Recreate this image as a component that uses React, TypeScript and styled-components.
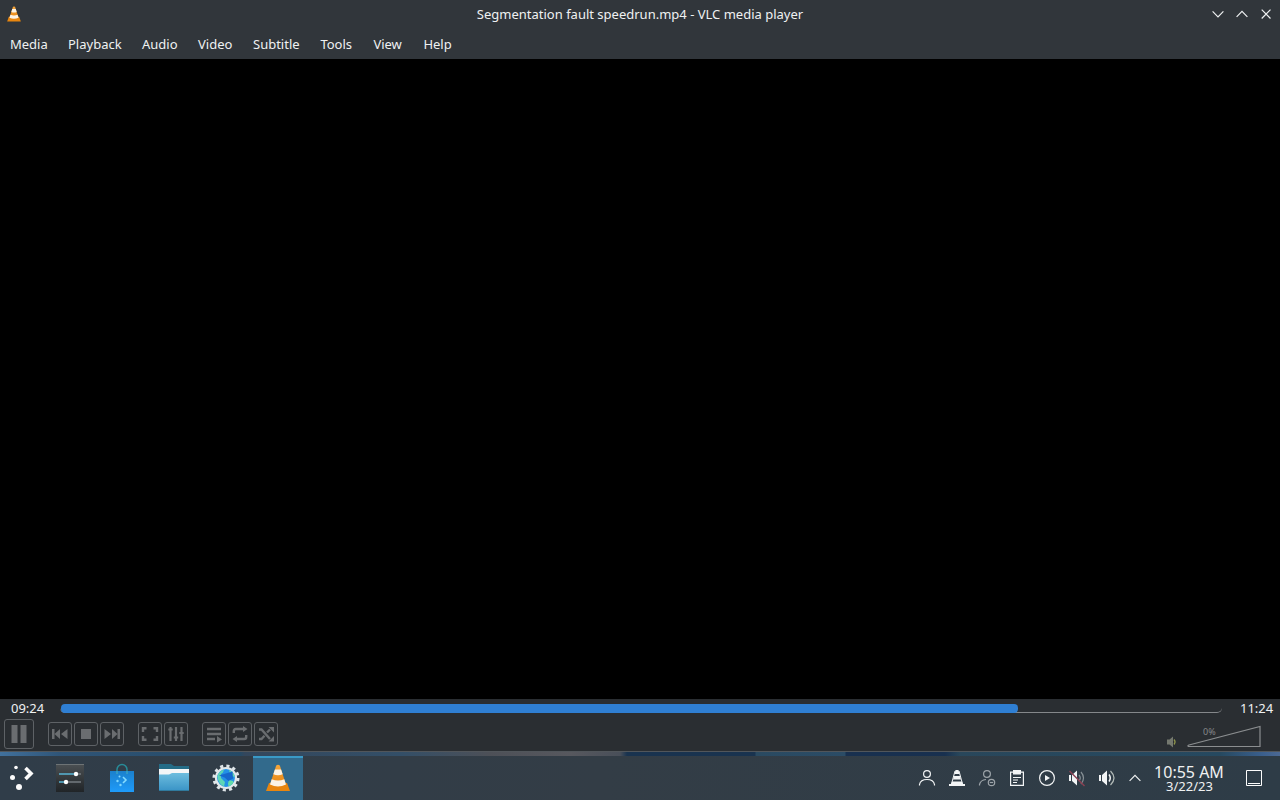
import React from "react";
import styled, { createGlobalStyle } from "styled-components";

const GlobalStyle = createGlobalStyle`
  body { margin: 0; background: #000; overflow: hidden; font-family: "Noto Sans", sans-serif; }
  * { box-sizing: border-box; }
  svg { display: block; flex: none; }
`;

const Desktop = styled.div`
  width: 1280px;
  height: 800px;
  display: flex;
  flex-direction: column;
  color: #eff1f2;
  font-size: 13px;
`;

const TitleBar = styled.header`
  height: 30px;
  flex: none;
  display: grid;
  grid-template-columns: 80px 1fr 80px;
  align-items: center;
  padding: 0 6px 2px;
  background: #31363b;
`;

const Title = styled.div`
  text-align: center;
  line-height: 18px;
  white-space: nowrap;
`;

const WindowButtons = styled.div`
  display: flex;
  justify-content: flex-end;
  gap: 8px;
`;

const MenuBar = styled.nav`
  height: 29px;
  flex: none;
  display: flex;
  background: #31363b;
`;

const MenuItem = styled.div<{ $width: number }>`
  width: ${(p) => p.$width}px;
  padding-left: 10px;
  line-height: 29px;
  white-space: nowrap;
`;

const Video = styled.main`
  height: 640px;
  flex: none;
  background: #000;
`;

const Controls = styled.section`
  height: 53px;
  flex: none;
  background: #2a2e32;
  border-bottom: 1px solid #51565b;
`;

const SeekRow = styled.div`
  height: 20px;
  display: flex;
  align-items: flex-start;
`;

const Time = styled.div<{ $side: "left" | "right" }>`
  width: ${(p) => (p.$side === "left" ? 60 : 58)}px;
  padding-left: ${(p) => (p.$side === "left" ? 11 : 18)}px;
  line-height: 18px;
`;

const Track = styled.div`
  width: 1162px;
  height: 9px;
  margin-top: 5px;
  border-bottom: 1px solid #85888b;
  border-radius: 0 0 5px 5px;
`;

const Played = styled.div`
  height: 9px;
  margin-left: 1px;
  border-radius: 4px;
  background: #2f7fd3;
`;

const ButtonRow = styled.div`
  height: 32px;
  display: flex;
  align-items: flex-start;
  padding-left: 4px;
`;

const Group = styled.div<{ $gap: number }>`
  display: flex;
  gap: 2px;
  margin: 3px 0 0 ${(p) => p.$gap}px;
`;

const ControlButton = styled.div<{ $size: number }>`
  width: ${(p) => p.$size}px;
  height: ${(p) => p.$size}px;
  display: flex;
  align-items: center;
  justify-content: center;
  border: 1px solid #5e6266;
  border-radius: 3px;
  color: #6a6d70;
`;

const Volume = styled.div`
  display: flex;
  margin-left: auto;
  padding-right: 17px;
`;

const VolumeSlider = styled.div`
  position: relative;
  width: 76px;
  height: 30px;
`;

const VolumeLabel = styled.span`
  position: absolute;
  left: 16px;
  top: 7px;
  font-size: 9px;
  line-height: 12px;
  color: #85888a;
`;

const WallpaperStrip = styled.div`
  height: 4px;
  flex: none;
  background: linear-gradient(
    90deg,
    #41719d 0, #2f5578 60px, #254a66 240px, #34475c 245px, #334f68 400px,
    #4d5057 490px, #57585e 570px, #494f59 620px, #19334f 627px, #19334f 755px,
    #2a4a61 756px, #2b4c66 845px, #18304f 846px, #18304f 945px, #29475b 960px,
    #264960 1220px, #3a5f8d 1262px, #4c6994 1280px
  );
`;

const Taskbar = styled.footer`
  height: 44px;
  flex: none;
  display: flex;
  background: linear-gradient(90deg, #303d49 0, #333d46 600px, #2e3c47 1280px);
`;

const Task = styled.div<{ $active?: boolean; $width: number }>`
  width: ${(p) => p.$width}px;
  height: 44px;
  display: flex;
  align-items: center;
  justify-content: center;
  background: ${(p) => (p.$active ? "#326a8c" : "transparent")};
  border-top: ${(p) => (p.$active ? "2px solid #3a9ac7" : "0")};
  padding-bottom: ${(p) => (p.$active ? "2px" : "0")};
`;

const Tray = styled.div`
  display: flex;
  align-items: center;
  gap: 12px;
  margin-left: auto;
`;

const TrayExpander = styled.div`
  margin-left: -1px;
`;

const Clock = styled.div`
  width: 84px;
  padding-top: 8px;
  margin: 0 14px 0 4px;
  text-align: center;
  white-space: nowrap;
`;

const ClockTime = styled.div`
  font-size: 16px;
  line-height: 17px;
`;

const ClockDate = styled.div`
  font-size: 13px;
  line-height: 10px;
  margin-left: 1px;
`;

const ShowDesktop = styled.div`
  display: flex;
  align-items: center;
  width: 35px;
`;

const Cone = ({ size }: { size: number }) => (
  <svg width={size} height={size} viewBox="0 0 28 28">
    <defs>
      <linearGradient id="cone" x1="0" y1="0" x2="0" y2="1">
        <stop offset="0" stopColor="#f5a63c" />
        <stop offset="1" stopColor="#e8850f" />
      </linearGradient>
    </defs>
    <path d="M5 19h18l3 8H2z" fill="#e8860f" />
    <path d="M12.200 1.500Q14 0 15.800 1.500L22 20.500q-8 4-16 0z" fill="url(#cone)" />
    <path d="M10.900 5.400h6.200l1.600 4.900q-4.700 1.800-9.400 0zM7.700 15.300q6.300 2.500 12.600 0L22 20.500q-8 4-16 0z" fill="#fbf3e6" />
  </svg>
);

const Chevron = ({ up }: { up?: boolean }) => (
  <svg width="16" height="16" viewBox="0 0 16 16" fill="none" stroke="currentColor" strokeWidth="1.2">
    <path d={up ? "M2.6 10.8 8 5.4l5.4 5.4" : "M2.6 5.4 8 10.8l5.4-5.4"} />
  </svg>
);

const Glyph = ({ children }: { children: React.ReactNode }) => (
  <svg width="18" height="18" viewBox="0 0 18 18" fill="none" stroke="currentColor" strokeWidth="2.4">
    {children}
  </svg>
);

const TrayIcon = ({ dim, children }: { dim?: boolean; children: React.ReactNode }) => (
  <svg width="18" height="18" viewBox="0 0 18 18" fill="none" stroke={dim ? "#9da4a9" : "#f3f5f6"} strokeWidth="1.2">
    {children}
  </svg>
);

const menus: [string, number][] = [
  ["Media", 58], ["Playback", 74], ["Audio", 56], ["Video", 55],
  ["Subtitle", 67.4], ["Tools", 53], ["View", 50], ["Help", 50],
];

const GearGlobe = () => (
  <svg width="28" height="28" viewBox="0 0 28 28">
    <circle cx="14" cy="14" r="12" fill="none" stroke="#dfe5e8" strokeWidth="3" strokeDasharray="3.1 3.183" />
    <circle cx="14" cy="14" r="10" fill="#2391e6" stroke="#e3e8ea" strokeWidth="2.200" />
    <path d="M5.400 12Q7 7 12 5.500l-1 3-2 1.500v4l4 4-1 4.500Q6 20 5.400 12z" fill="#5ed6b5" />
    <path d="M17 6q5 2 5.800 7l-3-1-2-3zM17 16l4 1 .5 1.500q-2 3.500-5 4l-.5-3z" fill="#65dca9" />
    <path d="M7 11.500 20.500 7.500 21 14.500l-4.500 2.500-4-3.500z" fill="#1668cc" />
  </svg>
);

export default function App() {
  return (
    <Desktop>
      <GlobalStyle />
      <TitleBar>
        <Cone size={16} />
        <Title>Segmentation fault speedrun.mp4 - VLC media player</Title>
        <WindowButtons>
          <Chevron />
          <Chevron up />
          <svg width="16" height="16" viewBox="0 0 16 16" stroke="currentColor" strokeWidth="1.2">
            <path d="m3.700 3.700 8.800 8.800m0-8.800-8.800 8.800" />
          </svg>
        </WindowButtons>
      </TitleBar>
      <MenuBar>
        {menus.map(([label, width]) => (
          <MenuItem key={label} $width={width}>{label}</MenuItem>
        ))}
      </MenuBar>
      <Video />
      <Controls>
        <SeekRow>
          <Time $side="left">09:24</Time>
          <Track><Played style={{ width: 957 }} /></Track>
          <Time $side="right">11:24</Time>
        </SeekRow>
        <ButtonRow>
          <ControlButton $size={30}>
            <svg width="18" height="20" viewBox="0 0 18 20" fill="currentColor"><path d="M1.500 1h6v18h-6zM10.500 1h6v18h-6z" /></svg>
          </ControlButton>
          <Group $gap={14}>
            <ControlButton $size={24}><Glyph><path d="M1 4h2.500v10H1zM3.500 9 9 4v10zM10 9l6.500-5v10z" fill="currentColor" stroke="none" /></Glyph></ControlButton>
            <ControlButton $size={24}><Glyph><path d="M4 4h10v10H4z" fill="currentColor" stroke="none" /></Glyph></ControlButton>
            <ControlButton $size={24}><Glyph><path d="M14.500 4H17v10h-2.500zM9 4l5.500 5L9 14zM1.500 4 8 9l-6.500 5z" fill="currentColor" stroke="none" /></Glyph></ControlButton>
          </Group>
          <Group $gap={14}>
            <ControlButton $size={24}><Glyph><path d="M5.500 3.200H2V7M12.500 3.200H16V7M5.500 14.800H2V11M12.500 14.800H16V11" /></Glyph></ControlButton>
            <ControlButton $size={24}><Glyph><path d="M3.500 2v14M9 2v14M14.500 2v14M1.300 4.500h4.400M6.800 12.500h4.400M12.300 8h4.400" strokeWidth="2.200" /></Glyph></ControlButton>
          </Group>
          <Group $gap={14}>
            <ControlButton $size={24}><Glyph><path d="M2 4h14M2 9h14M2 14h8" /><path d="m12 11 5 3.500-5 3z" fill="currentColor" stroke="none" /></Glyph></ControlButton>
            <ControlButton $size={24}><Glyph><path d="M2.800 8V6q0-2 2-2H13M15.200 10v2q0 2-2 2H5" /><path d="m12 1 4.500 3-4.500 3zM6 11l-4.500 3L6 17z" fill="currentColor" stroke="none" /></Glyph></ControlButton>
            <ControlButton $size={24}><Glyph><path d="M2 4.500h2.500L13 14M2 14h2.500l3-3.200M10 7.500 13 4.500" /><path d="M11.500 2H17v5.500zM11.500 16.500H17V11z" fill="currentColor" stroke="none" /></Glyph></ControlButton>
          </Group>
          <Volume>
            <svg width="20" height="30" viewBox="0 0 20 30">
              <path d="M0 20.500h2.500L6 17.500v11l-3.500-3H0z" fill="#74786f" />
              <path d="M7 20.500q2.200 2.500 0 5" fill="none" stroke="#8e944c" strokeWidth="1.200" />
            </svg>
            <VolumeSlider>
              <svg width="76" height="30" viewBox="0 0 76 30">
                <path d="M2 26 73 7.500v20H1.500q-1.500-.5.500-1.500z" fill="none" stroke="#8b8e90" strokeWidth="1.200" />
              </svg>
              <VolumeLabel>0%</VolumeLabel>
            </VolumeSlider>
          </Volume>
        </ButtonRow>
      </Controls>
      <WallpaperStrip />
      <Taskbar>
        <Task $width={42}>
          <svg width="26" height="28" viewBox="0 0 26 28" fill="#fcfcfc">
            <circle cx="8" cy="3.500" r="1.800" /><circle cx="4.500" cy="13.500" r="2.500" /><circle cx="11" cy="23" r="3" />
            <path d="m17.500 4 5.500 5.500-5.500 5.500" fill="none" stroke="#fcfcfc" strokeWidth="3.600" />
          </svg>
        </Task>
        <Task $width={56}>
          <svg width="28" height="28" viewBox="0 0 28 28">
            <defs><linearGradient id="settings" x1="0" y1="0" x2="0" y2="1"><stop stopColor="#4b5053" /><stop offset="1" stopColor="#202427" /></linearGradient></defs>
            <path d="M0 0h28v28H0z" fill="url(#settings)" /><path d="M0 .5h28" stroke="#6d7375" />
            <path d="M3 10h17M3 18h7" stroke="#58b4d4" strokeWidth="1.600" /><path d="M20 10h5M10 18h15" stroke="#747b80" strokeWidth="1.400" />
            <circle cx="20" cy="10" r="2.200" fill="white" /><circle cx="10" cy="18" r="2.200" fill="white" />
          </svg>
        </Task>
        <Task $width={48}>
          <svg width="26" height="30" viewBox="0 0 26 30">
            <defs><linearGradient id="bag" x1="0" y1="0" x2="0" y2="1"><stop stopColor="#1b80cc" /><stop offset="1" stopColor="#1e9bfa" /></linearGradient></defs>
            <path d="M8 9V6.500a5 5 0 0 1 10 0V9" fill="none" stroke="#288b98" strokeWidth="1.500" />
            <path d="M1 8h24v21H1z" fill="url(#bag)" /><path d="M8 11V8m10 3V8" stroke="#49b3bb" />
            <circle cx="10.500" cy="13.500" r="1" fill="#86d9ff" /><circle cx="8.500" cy="18" r="1.200" fill="#7ed7ff" /><circle cx="11.500" cy="22" r="1.200" fill="#7ed7ff" />
            <path d="m14 14 3 3-3 3" fill="none" stroke="#85dcff" strokeWidth="1.600" />
          </svg>
        </Task>
        <Task $width={56}>
          <svg width="30" height="30" viewBox="0 0 30 30">
            <defs><linearGradient id="folder" x1="0" y1="0" x2="0" y2="1"><stop stopColor="#6dbdde" /><stop offset="1" stopColor="#3993c6" /></linearGradient></defs>
            <path d="M0 1h12l3 2h15v18H0z" fill="#246c87" /><path d="M0 6h30v7H0z" fill="#f4f6f7" />
            <path d="M0 11.500h10l3-1.500h17v18H0z" fill="url(#folder)" /><path d="M0 27.500h30" stroke="#307a9d" />
          </svg>
        </Task>
        <Task $width={48}><GearGlobe /></Task>
        <Task $width={3} />
        <Task $width={50} $active><Cone size={28} /></Task>
        <Tray>
          <TrayIcon><circle cx="9" cy="5" r="3.400" /><path d="M1.500 16.500v-1q1-5 7.500-5t7.500 5v1" /></TrayIcon>
          <TrayIcon><path d="M7.500 1h3l1 4h-5zM6 7h6l1 3.500H5zM4 12.500h10l1 2.500h2v2H1v-2h2z" fill="#f3f5f6" stroke="none" /><path d="m7 2-3.500 13M11 2l3.500 13" strokeWidth="1" /></TrayIcon>
          <TrayIcon dim><circle cx="9" cy="5" r="3.400" /><path d="M1.500 16.500v-1q1-4.500 6.500-5" /><circle cx="13.500" cy="13.500" r="3.200" /><path d="M11.800 13.500h3.400" /></TrayIcon>
          <TrayIcon><path d="M2.600 3.100h12.800v13.300H2.600zM5 8.500h8M5 11h5M5 13.500h4" /><path d="M5 1h8v4.500H5z" fill="#f3f5f6" stroke="none" /></TrayIcon>
          <TrayIcon><circle cx="9" cy="9" r="7.400" /><path d="m7 6 5 3-5 3z" fill="#f3f5f6" stroke="none" /></TrayIcon>
          <TrayIcon><path d="M1 6h2v6H1zM4 6l5-4.500v15L4 12z" fill="#f3f5f6" stroke="none" /><path d="M11 6q2.500 3 0 6M13 3q5 6 0 12" stroke="#879095" /><path d="m1.500 2 15 15" stroke="#8b4052" strokeWidth="1.400" /></TrayIcon>
          <TrayIcon><path d="M1 6h2v6H1zM4 6l5-4.500v15L4 12z" fill="#f3f5f6" stroke="none" /><path d="M11 5.500q2.500 3.500 0 7" strokeWidth="1.500" /><path d="M12.500 2q7 7 0 14" stroke="#b4bcb9" /></TrayIcon>
          <TrayExpander><Chevron up /></TrayExpander>
        </Tray>
        <Clock><ClockTime>10:55 AM</ClockTime><ClockDate>3/22/23</ClockDate></Clock>
        <ShowDesktop>
          <svg width="18" height="18" viewBox="0 0 18 18" fill="none" stroke="#fcfcfc"><path d="M1.500 1.500h15v15h-15zM3 14.500h12" /></svg>
        </ShowDesktop>
      </Taskbar>
    </Desktop>
  );
}
